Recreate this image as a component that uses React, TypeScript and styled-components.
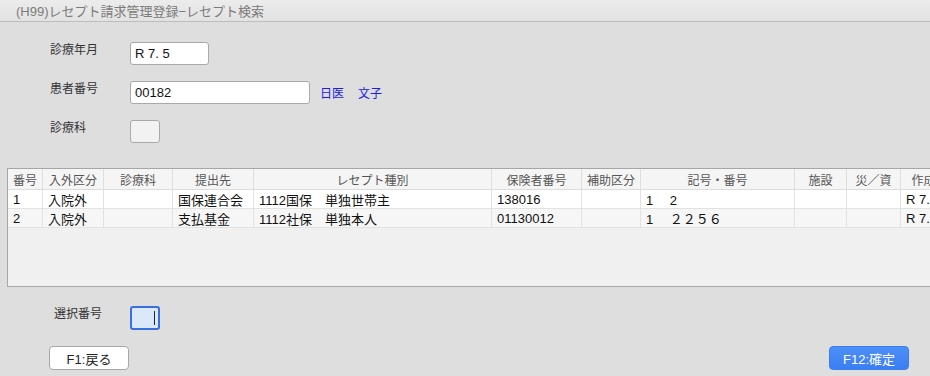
import React from "react";
import styled, { createGlobalStyle } from "styled-components";

const Global = createGlobalStyle`
  html, body { margin: 0; padding: 0; background: #dedede; }
  body { font-family: "Liberation Sans", "Noto Sans CJK JP", sans-serif; }
  * { box-sizing: border-box; }
`;

const Window = styled.div`
  width: 930px;
  height: 376px;
  background: #dedede;
  display: flex;
  flex-direction: column;
  overflow: hidden;
  border-bottom-left-radius: 6px;
`;

const TitleBar = styled.div`
  height: 22px;
  flex: none;
  background: linear-gradient(#ececec, #e2e2e2);
  border-bottom: 1px solid #bdbdbd;
  display: flex;
  align-items: center;
  padding-left: 16px;
  font-size: 13px;
  color: #7b7b7b;
  font-family: "Liberation Sans", "Noto Sans CJK JP", sans-serif;
`;

const Form = styled.div`
  display: flex;
  flex-direction: column;
  gap: 16px;
  padding: 20px 0 0 50px;
`;

const FieldRow = styled.div`
  display: flex;
  align-items: center;
  height: 23px;
`;

const Label = styled.div<{ $indent?: number }>`
  width: 80px;
  padding-left: ${(p) => p.$indent ?? 0}px;
  font-family: "Noto Sans CJK JP", sans-serif;
  font-size: 12px;
  color: #333;
  align-self: flex-start;
  line-height: 14px;
`;

const TextBox = styled.div<{ $w: number; $empty?: boolean }>`
  width: ${(p) => p.$w}px;
  height: 23px;
  background: ${(p) => (p.$empty ? "#f2f2f2" : "#ffffff")};
  border: 1px solid #a9a9a9;
  border-radius: 3px;
  padding: 0 4px;
  display: flex;
  align-items: center;
  font-size: 13px;
  color: #111;
`;

const FocusBox = styled.div`
  width: 30px;
  height: 24px;
  background: #dbe8fa;
  border: 2px solid #3a6fe0;
  border-radius: 3px;
  display: flex;
  align-items: center;
  justify-content: flex-end;
  padding-right: 3px;
`;

const Caret = styled.div`
  width: 1px;
  height: 14px;
  background: #222;
`;

const LinkText = styled.span<{ $ml: number }>`
  margin-left: ${(p) => p.$ml}px;
  font-family: "Noto Sans CJK JP", sans-serif;
  font-size: 12px;
  color: #1c1ce6;
`;

const TableWrap = styled.div`
  margin: 25px 0 0 7px;
  width: 1000px;
  height: 119px;
  border: 1px solid #a6a6a6;
  background: #f0f0f0;
  flex: none;
  overflow: hidden;
`;

const cols = "35px 61px 69px 81px 238px 90px 59px 154px 52px 54px 46px";

const HeadRow = styled.div`
  display: grid;
  grid-template-columns: ${cols};
  height: 21px;
  background: #f5f5f5;
  border-bottom: 1px solid #dcdcdc;
`;

const HeadCell = styled.div`
  border-right: 1px solid #dedede;
  display: flex;
  align-items: center;
  justify-content: center;
  font-family: "Noto Sans CJK JP", sans-serif;
  font-size: 12px;
  color: #555;
  white-space: nowrap;
  overflow: hidden;
`;

const DataRow = styled.div<{ $alt?: boolean }>`
  display: grid;
  grid-template-columns: ${cols};
  height: 19px;
  background: ${(p) => (p.$alt ? "#f6f6f6" : "#ffffff")};
  border-bottom: 1px solid #e2e2e2;
`;

const Cell = styled.div`
  border-right: 1px solid #e2e2e2;
  display: flex;
  align-items: center;
  padding-left: 5px;
  font-family: "Liberation Sans", "Noto Sans CJK JP", sans-serif;
  font-size: 13px;
  color: #111;
  white-space: pre;
  overflow: hidden;
`;

const SelectRow = styled.div`
  display: flex;
  align-items: center;
  padding: 19px 0 0 50px;
  height: 24px;
  box-sizing: content-box;
`;

const ButtonBar = styled.div`
  display: flex;
  justify-content: space-between;
  padding: 16px 21px 0 49px;
`;

const Button = styled.div<{ $primary?: boolean }>`
  width: 80px;
  height: 24px;
  border-radius: 4px;
  display: flex;
  align-items: center;
  justify-content: center;
  font-family: "Liberation Sans", "Noto Sans CJK JP", sans-serif;
  font-size: 13px;
  background: ${(p) => (p.$primary ? "linear-gradient(#4d8ff8, #3a7ef2)" : "#ffffff")};
  color: ${(p) => (p.$primary ? "#ffffff" : "#222")};
  border: 1px solid ${(p) => (p.$primary ? "#3a7ef2" : "#a8a8a8")};
`;

const headers = ["番号", "入外区分", "診療科", "提出先", "レセプト種別", "保険者番号", "補助区分", "記号・番号", "施設", "災／資", "作成"];

const rows = [
  ["1", "入院外", "", "国保連合会", "1112国保　単独世帯主", "138016", "", "1　 2", "", "", "R 7.10"],
  ["2", "入院外", "", "支払基金", "1112社保　単独本人", "01130012", "", "1　 ２２５６", "", "", "R 7.10"],
];

export default function App() {
  return (
    <>
      <Global />
      <Window>
        <TitleBar>(H99)レセプト請求管理登録−レセプト検索</TitleBar>
        <Form>
          <FieldRow>
            <Label>診療年月</Label>
            <TextBox $w={79}>R 7. 5</TextBox>
          </FieldRow>
          <FieldRow>
            <Label>患者番号</Label>
            <TextBox $w={180}>00182</TextBox>
            <LinkText $ml={10}>日医</LinkText>
            <LinkText $ml={14}>文子</LinkText>
          </FieldRow>
          <FieldRow>
            <Label>診療科</Label>
            <TextBox $w={30} $empty />
          </FieldRow>
        </Form>
        <TableWrap>
          <HeadRow>
            {headers.map((h) => (
              <HeadCell key={h}>{h}</HeadCell>
            ))}
          </HeadRow>
          {rows.map((r, i) => (
            <DataRow key={i} $alt={i % 2 === 1}>
              {r.map((c, j) => (
                <Cell key={j}>{c}</Cell>
              ))}
            </DataRow>
          ))}
        </TableWrap>
        <SelectRow>
          <Label $indent={4}>選択番号</Label>
          <FocusBox>
            <Caret />
          </FocusBox>
        </SelectRow>
        <ButtonBar>
          <Button>F1:戻る</Button>
          <Button $primary>F12:確定</Button>
        </ButtonBar>
      </Window>
    </>
  );
}
